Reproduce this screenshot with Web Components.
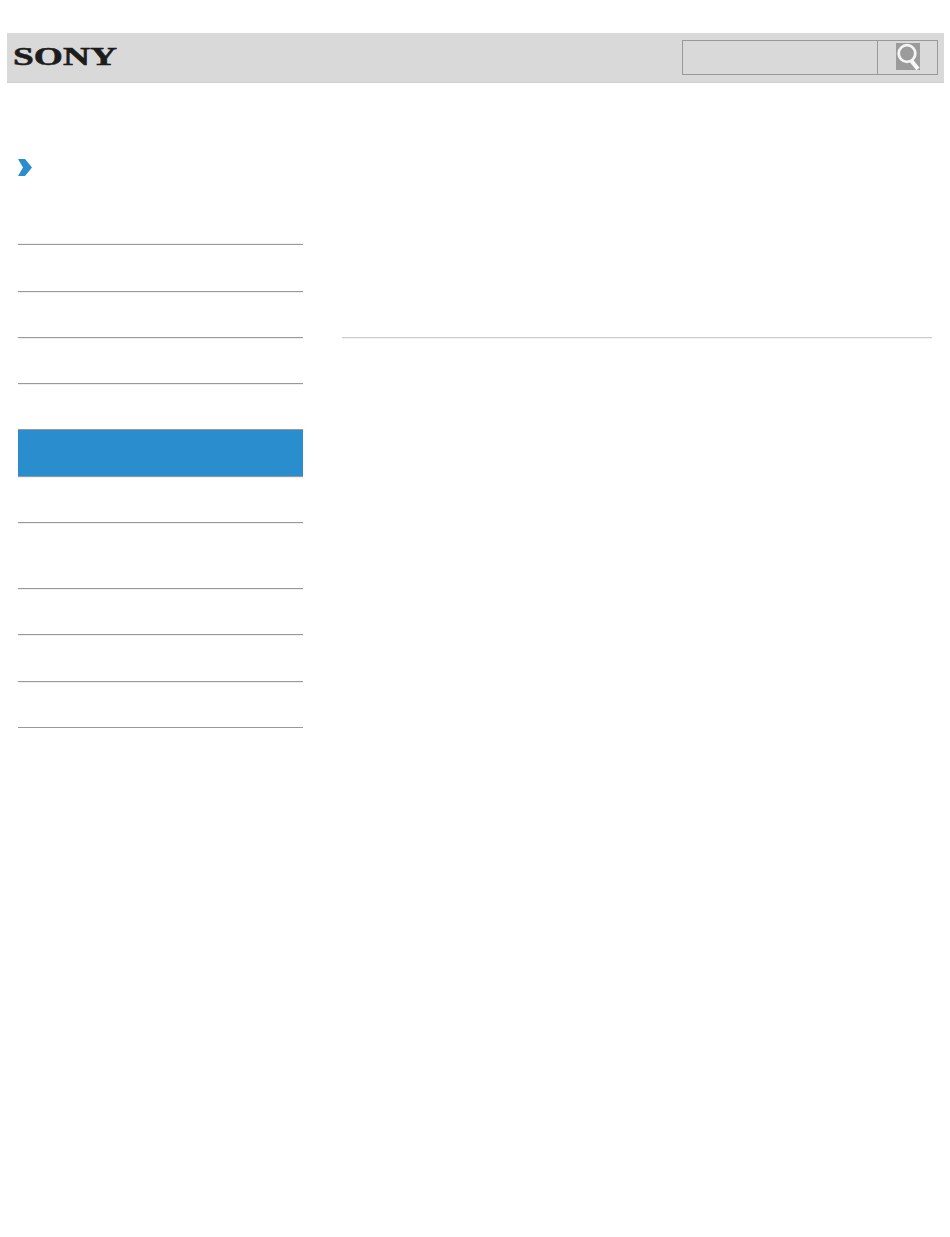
<!DOCTYPE html>
<html>
<head>
<meta charset="utf-8">
<title>SONY</title>
<style>
  html, body { margin: 0; padding: 0; background: #fff; }
  body { font-family: "Liberation Sans", Arial, sans-serif; }
  .columns { display: grid; grid-template-columns: 285px 590px; column-gap: 39px; padding: 0 0 0 18px; }
</style>
</head>
<body>
<site-header></site-header>
<div class="columns">
  <side-nav>
    <nav-row size="47"></nav-row>
    <nav-row size="46"></nav-row>
    <nav-row size="46"></nav-row>
    <nav-row size="46"></nav-row>
    <nav-row size="47" active></nav-row>
    <nav-row size="46"></nav-row>
    <nav-row size="66"></nav-row>
    <nav-row size="46"></nav-row>
    <nav-row size="47"></nav-row>
    <nav-row size="46"></nav-row>
  </side-nav>
  <main-pane></main-pane>
</div>

<script>
(function() {
  class SiteHeader extends HTMLElement {
    constructor() {
      super();
      this.attachShadow({ mode: "open" });
      this.shadowRoot.innerHTML = `
        <style>
          :host {
            display: flex;
            justify-content: space-between;
            align-items: flex-start;
            box-sizing: border-box;
            height: 50px;
            margin: 33px 6px 0 7px;
            padding: 7px 6px 0 6px;
            background: #d9d9d9;
            border-bottom: 1px solid #cfcfcf;
          }
          .logo {
            display: block;
            width: 104px;
            height: 34px;
            overflow: visible;
          }
          .logo text {
            font-family: "Liberation Serif", serif;
            font-weight: bold;
            font-size: 25px;
            fill: #1c1c1c;
            stroke: #1c1c1c;
            stroke-width: 0.5px;
          }
        </style>
        <svg class="logo" viewBox="0 0 104 34">
          <text x="0" y="25" textLength="104" lengthAdjust="spacingAndGlyphs">SONY</text>
        </svg>
        <search-box></search-box>
      `;
    }
  }

  class SearchBox extends HTMLElement {
    constructor() {
      super();
      this.attachShadow({ mode: "open" });
      this.shadowRoot.innerHTML = `
        <style>
          :host {
            display: flex;
            box-sizing: border-box;
            width: 256px;
            height: 35px;
            border: 1px solid #999;
          }
          .field { flex: 1; }
          .go {
            display: flex;
            justify-content: center;
            width: 59px;
            padding-top: 2px;
            border-left: 1px solid #999;
          }
          svg { display: block; width: 24px; height: 27px; }
        </style>
        <div class="field"></div>
        <div class="go">
          <svg viewBox="0 0 24 27">
            <rect width="24" height="27" fill="#9b9b9b"/>
            <circle cx="11" cy="10.5" r="8.3" fill="none" stroke="#f4f4f4" stroke-width="2.8"/>
            <path d="M15.5 18 L22 26" fill="none" stroke="#f8f8f8" stroke-width="4.2"/>
          </svg>
        </div>
      `;
    }
  }

  class SideNav extends HTMLElement {
    constructor() {
      super();
      this.attachShadow({ mode: "open" });
      this.shadowRoot.innerHTML = `
        <style>
          :host { display: block; padding-top: 76px; }
          .crumb { height: 85px; }
          .crumb svg { display: block; width: 14px; height: 17px; }
          .rows { border-top: 1px solid #999; box-shadow: 0 -1px 0 #f2f2f2; }
        </style>
        <div class="crumb">
          <svg viewBox="0 0 14 17">
            <path d="M0 0 H7 L14 8.5 L7 17 H0 L5 8.5 Z" fill="#2a8dce"/>
          </svg>
        </div>
        <div class="rows"><slot></slot></div>
      `;
    }
  }

  class NavRow extends HTMLElement {
    static get observedAttributes() { return [ "size" ]; }

    attributeChangedCallback(name, oldValue, newValue) {
      if (name === "size") {
        this.style.height = `${newValue}px`;
      }
    }

    constructor() {
      super();
      this.attachShadow({ mode: "open" });
      this.shadowRoot.innerHTML = `
        <style>
          :host {
            display: block;
            box-sizing: border-box;
            border-bottom: 1px solid #999;
            box-shadow: 0 1px 0 #efefef;
          }
          :host([active]) { background: #2a8dce; }
        </style>
        <slot></slot>
      `;
    }
  }

  class MainPane extends HTMLElement {
    constructor() {
      super();
      this.attachShadow({ mode: "open" });
      this.shadowRoot.innerHTML = `
        <style>
          :host { display: block; padding-top: 254px; }
          hr { margin: 0; border: 0; border-top: 1px solid #ccc; box-shadow: 0 1px 0 #f2f2f2; }
        </style>
        <hr>
      `;
    }
  }

  customElements.define("site-header", SiteHeader);
  customElements.define("search-box", SearchBox);
  customElements.define("side-nav", SideNav);
  customElements.define("nav-row", NavRow);
  customElements.define("main-pane", MainPane);
})();
</script>
</body>
</html>
